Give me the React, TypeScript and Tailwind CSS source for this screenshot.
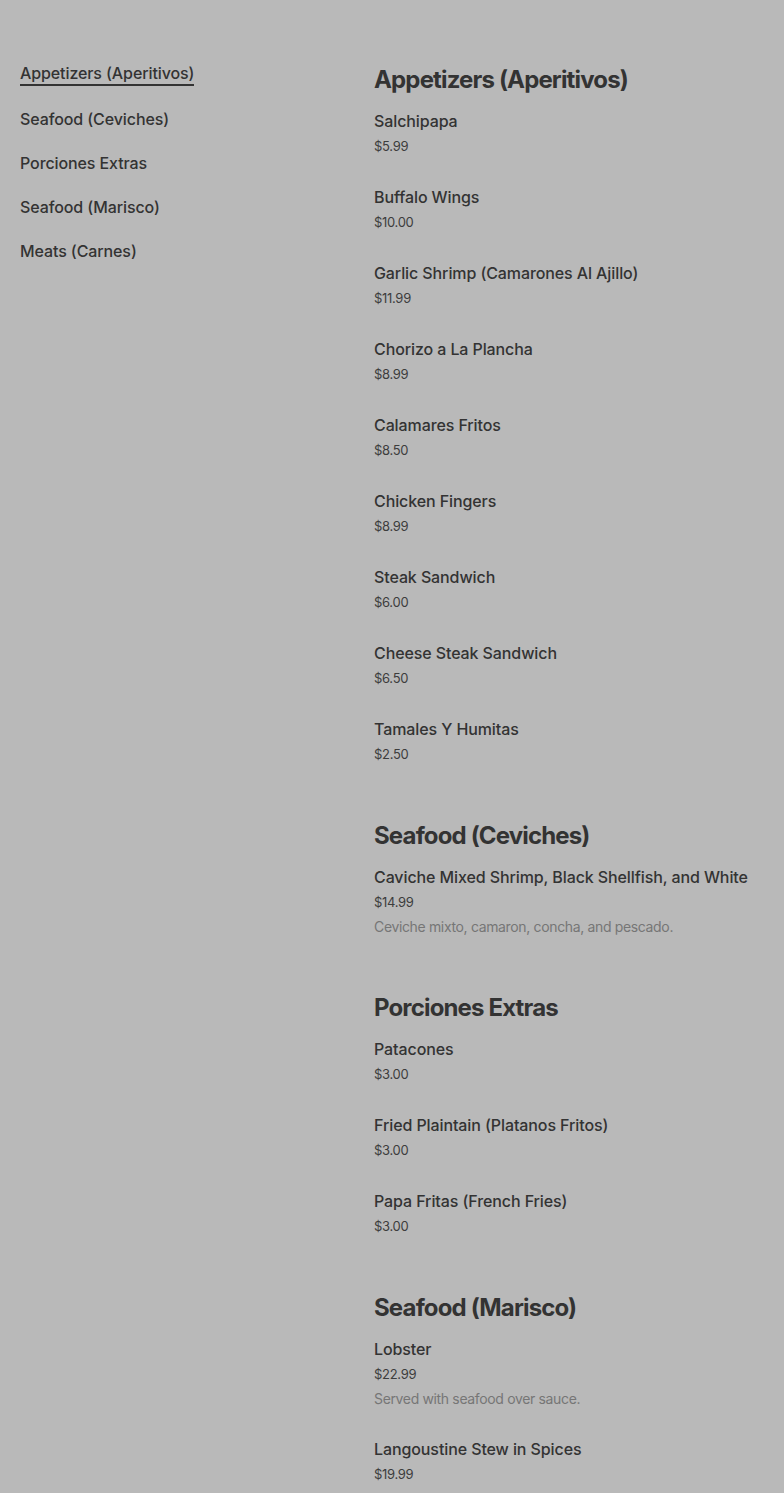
import React from 'react'

type Item = { name: string; price: string; desc?: string }
type Section = { title: string; items: Item[] }

const sections: Section[] = [
  {
    title: 'Appetizers (Aperitivos)',
    items: [
      { name: 'Salchipapa', price: '$5.99' },
      { name: 'Buffalo Wings', price: '$10.00' },
      { name: 'Garlic Shrimp (Camarones Al Ajillo)', price: '$11.99' },
      { name: 'Chorizo a La Plancha', price: '$8.99' },
      { name: 'Calamares Fritos', price: '$8.50' },
      { name: 'Chicken Fingers', price: '$8.99' },
      { name: 'Steak Sandwich', price: '$6.00' },
      { name: 'Cheese Steak Sandwich', price: '$6.50' },
      { name: 'Tamales Y Humitas', price: '$2.50' },
    ],
  },
  {
    title: 'Seafood (Ceviches)',
    items: [
      {
        name: 'Caviche Mixed Shrimp, Black Shellfish, and White',
        price: '$14.99',
        desc: 'Ceviche mixto, camaron, concha, and pescado.',
      },
    ],
  },
  {
    title: 'Porciones Extras',
    items: [
      { name: 'Patacones', price: '$3.00' },
      { name: 'Fried Plaintain (Platanos Fritos)', price: '$3.00' },
      { name: 'Papa Fritas (French Fries)', price: '$3.00' },
    ],
  },
  {
    title: 'Seafood (Marisco)',
    items: [
      { name: 'Lobster', price: '$22.99', desc: 'Served with seafood over sauce.' },
      { name: 'Langoustine Stew in Spices', price: '$19.99' },
    ],
  },
]

const nav = ['Appetizers (Aperitivos)', 'Seafood (Ceviches)', 'Porciones Extras', 'Seafood (Marisco)', 'Meats (Carnes)']

export default function App() {
  return (
    <div className="min-h-screen bg-[#b9b9b9] text-[#333] font-['Inter',sans-serif]">
      <div className="grid grid-cols-[334px_1fr] gap-5 px-5 pt-[63px]">
        <nav className="flex flex-col gap-5 -mt-0.5">
          {nav.map((n, i) => (
            <div key={n} className={'text-[16px] leading-6 font-medium tracking-[-0.1px] ' + (i === 0 ? 'mb-0.5' : '')}>
              <span className={i === 0 ? 'border-b-2 border-[#333] pb-px' : ''}>{n}</span>
            </div>
          ))}
        </nav>
        <main className="flex flex-col gap-[52px]">
          {sections.map(s => (
            <section key={s.title}>
              <h2 className="text-[24px] leading-8 font-bold tracking-[-0.85px] pt-px">{s.title}</h2>
              <div className="mt-[13px] flex flex-col gap-[26px]">
                {s.items.map(it => (
                  <div key={it.name}>
                    <div className="text-[16px] leading-6 font-medium tracking-[-0.1px]">{it.name}</div>
                    <div className="text-[13px] leading-[26px] text-[#3d3d3d] tracking-[-0.3px]">{it.price}</div>
                    {it.desc && <div className="text-[14px] leading-6 text-[#767676] tracking-[-0.35px]">{it.desc}</div>}
                  </div>
                ))}
              </div>
            </section>
          ))}
        </main>
      </div>
    </div>
  )
}
